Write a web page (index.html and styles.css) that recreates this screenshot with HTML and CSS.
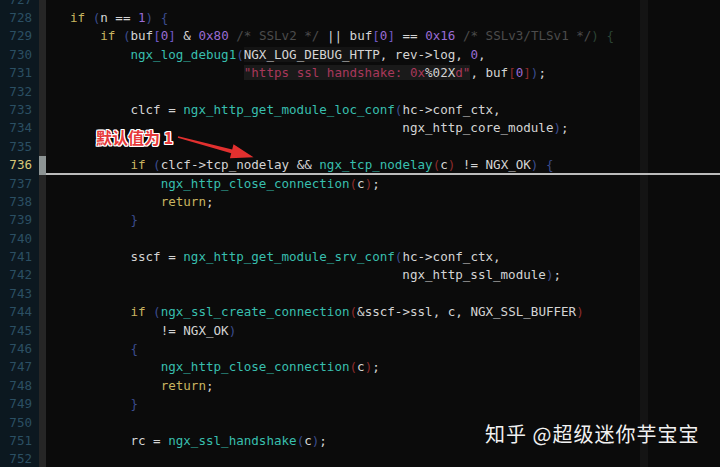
FILE: index.html
```html
<!DOCTYPE html>
<html lang="zh-CN">
<head>
    <meta charset="UTF-8">
    <meta name="viewport" content="width=device-width, initial-scale=1.0">
    <title>ngx_http_ssl_handshake</title>
    <link rel="stylesheet" href="styles.css">
</head>
<body>
    <div class="editor">
        <div class="lines">
            <div class="row"><span class="num">727</span><span class="bar"></span><span class="code"></span></div>
            <div class="row"><span class="num">728</span><span class="bar"></span><span class="code"><span class="k">if</span> <span class="p">(</span>n == <span class="n">1</span><span class="p">)</span> <span class="p">{</span></span></div>
            <div class="row"><span class="num">729</span><span class="bar"></span><span class="code">    <span class="k">if</span> <span class="p">(</span>buf<span class="b">[</span><span class="n">0</span><span class="b">]</span> &amp; <span class="n">0x80</span> <span class="c">/* SSLv2 */</span> || buf<span class="b">[</span><span class="n">0</span><span class="b">]</span> == <span class="n">0x16</span> <span class="c">/* SSLv3/TLSv1 */</span><span class="g">) {</span></span></div>
            <div class="row"><span class="num">730</span><span class="bar"></span><span class="code">        <span class="f">ngx_log_debug1</span><span class="p">(</span><span class="arg">NGX_LOG_DEBUG_HTTP</span>, rev-&gt;log, <span class="n">0</span>,</span></div>
            <div class="row"><span class="num">731</span><span class="bar"></span><span class="code">                       <span class="s">"https ssl handshake: 0x<span class="fmt">%02X</span>d"</span>, buf<span class="r">[</span><span class="n">0</span><span class="r">]</span><span class="p">)</span>;</span></div>
            <div class="row"><span class="num">732</span><span class="bar"></span><span class="code"></span></div>
            <div class="row"><span class="num">733</span><span class="bar"></span><span class="code">        clcf = <span class="f">ngx_http_get_module_loc_conf</span><span class="p">(</span>hc-&gt;conf_ctx,</span></div>
            <div class="row"><span class="num">734</span><span class="bar"></span><span class="code">                                            ngx_http_core_module<span class="p">)</span>;</span></div>
            <div class="row"><span class="num">735</span><span class="bar"></span><span class="code"></span></div>
            <div class="row current"><span class="num">736</span><span class="bar"></span><span class="code">        <span class="k">if</span> <span class="p">(</span>clcf-&gt;tcp_nodelay &amp;&amp; <span class="f">ngx_tcp_nodelay</span><span class="r">(</span>c<span class="r">)</span> != NGX_OK<span class="p">)</span> <span class="p">{</span></span></div>
            <div class="row"><span class="num">737</span><span class="bar"></span><span class="code">            <span class="f">ngx_http_close_connection</span><span class="r">(</span>c<span class="r">)</span>;</span></div>
            <div class="row"><span class="num">738</span><span class="bar"></span><span class="code">            <span class="k">return</span>;</span></div>
            <div class="row"><span class="num">739</span><span class="bar"></span><span class="code">        <span class="p">}</span></span></div>
            <div class="row"><span class="num">740</span><span class="bar"></span><span class="code"></span></div>
            <div class="row"><span class="num">741</span><span class="bar"></span><span class="code">        sscf = <span class="f">ngx_http_get_module_srv_conf</span><span class="p">(</span>hc-&gt;conf_ctx,</span></div>
            <div class="row"><span class="num">742</span><span class="bar"></span><span class="code">                                            ngx_http_ssl_module<span class="p">)</span>;</span></div>
            <div class="row"><span class="num">743</span><span class="bar"></span><span class="code"></span></div>
            <div class="row"><span class="num">744</span><span class="bar"></span><span class="code">        <span class="k">if</span> <span class="p">(</span><span class="f">ngx_ssl_create_connection</span><span class="r">(</span>&amp;sscf-&gt;ssl, c, NGX_SSL_BUFFER<span class="r">)</span></span></div>
            <div class="row"><span class="num">745</span><span class="bar"></span><span class="code">            != NGX_OK<span class="p">)</span></span></div>
            <div class="row"><span class="num">746</span><span class="bar"></span><span class="code">        <span class="p">{</span></span></div>
            <div class="row"><span class="num">747</span><span class="bar"></span><span class="code">            <span class="f">ngx_http_close_connection</span><span class="r">(</span>c<span class="r">)</span>;</span></div>
            <div class="row"><span class="num">748</span><span class="bar"></span><span class="code">            <span class="k">return</span>;</span></div>
            <div class="row"><span class="num">749</span><span class="bar"></span><span class="code">        <span class="p">}</span></span></div>
            <div class="row"><span class="num">750</span><span class="bar"></span><span class="code"></span></div>
            <div class="row"><span class="num">751</span><span class="bar"></span><span class="code">        rc = <span class="f">ngx_ssl_handshake</span><span class="p">(</span>c<span class="p">)</span>;</span></div>
            <div class="row"><span class="num">752</span><span class="bar"></span><span class="code"></span></div>
        </div>

        <!-- red note drawn over the code -->
        <div class="note">默认值为 1</div>
        <svg class="arrow" width="90" height="40" viewBox="170 130 90 40">
            <polygon points="178.2,136.2 232.2,149.4 233.5,144.3 253.5,157.2 229.9,158.3 231.2,153.2 177.8,137.8" fill="#e2302f"/>
        </svg>

        <div class="watermark">知乎 @超级迷你芋宝宝</div>
    </div>
</body>
</html>
```

FILE: styles.css
```css
:root {
    --bg: #0b0b0b;
    --gutter: #0c1820;
    --line-num: #2b4f63;
    --text: #d4d4d4;
    --keyword: #c9b560;
    --func: #38bfae;
    --number: #9a6bd4;
    --comment: #4c4c4c;
    --string: #a8385a;
    --paren: #3b4d90;
    --paren-red: #8e2c2c;
    --row-h: 18.4px;
}

html, body {
    margin: 0;
    padding: 0;
    background-color: var(--bg);
    overflow: hidden;
}

.editor {
    position: relative;
    width: 720px;
    height: 467px;
    overflow: hidden;
    font-family: 'DejaVu Sans Mono', 'Liberation Mono', monospace;
    font-size: 12.55px;
    color: var(--text);
}

.lines {
    margin-top: -9.4px;
}

.row {
    display: flex;
    height: var(--row-h);
    line-height: var(--row-h);
}

.num {
    flex: 0 0 39px;
    box-sizing: border-box;
    padding-right: 7px;
    text-align: right;
    background-color: var(--gutter);
    color: var(--line-num);
}

.bar {
    flex: 0 0 7px;
    background-color: #262626;
}

.code {
    flex: 1;
    padding-left: 24px;
    white-space: pre;
    background: linear-gradient(to right, transparent 594px, #141414 594px, #141414 602px, transparent 602px);
}

.current .num {
    color: #d8c878;
}

.current .bar {
    background-color: #8d9494;
}

.current .code {
    box-shadow: inset 0 -2px 0 #bcbcbc;
}

.k { color: var(--keyword); }
.f { color: var(--func); }
.n { color: var(--number); }
.c { color: var(--comment); }
.p { color: var(--paren); }
.r { color: var(--paren-red); }
.b { color: #6f58c4; }
.g { color: #2b4536; }
.fmt { color: var(--text); }

.s {
    color: var(--string);
    background-color: #1a1a1a;
}

.arg {
    background-color: #141414;
}

.note {
    position: absolute;
    left: 96px;
    top: 128px;
    font-family: 'Noto Sans CJK SC', sans-serif;
    font-size: 16px;
    line-height: 18px;
    font-weight: 700;
    color: #e6393a;
    text-shadow: 1px 0 0 #fff, -1px 0 0 #fff, 0 1px 0 #fff, 0 -1px 0 #fff,
                 1px 1px 0 #fff, -1px -1px 0 #fff, 1px -1px 0 #fff, -1px 1px 0 #fff;
}

.arrow {
    position: absolute;
    left: 170px;
    top: 130px;
}

.watermark {
    position: absolute;
    left: 485px;
    top: 419px;
    font-family: 'Noto Sans CJK SC', sans-serif;
    font-size: 20px;
    letter-spacing: 1px;
    color: #f2f2f2;
}
```
